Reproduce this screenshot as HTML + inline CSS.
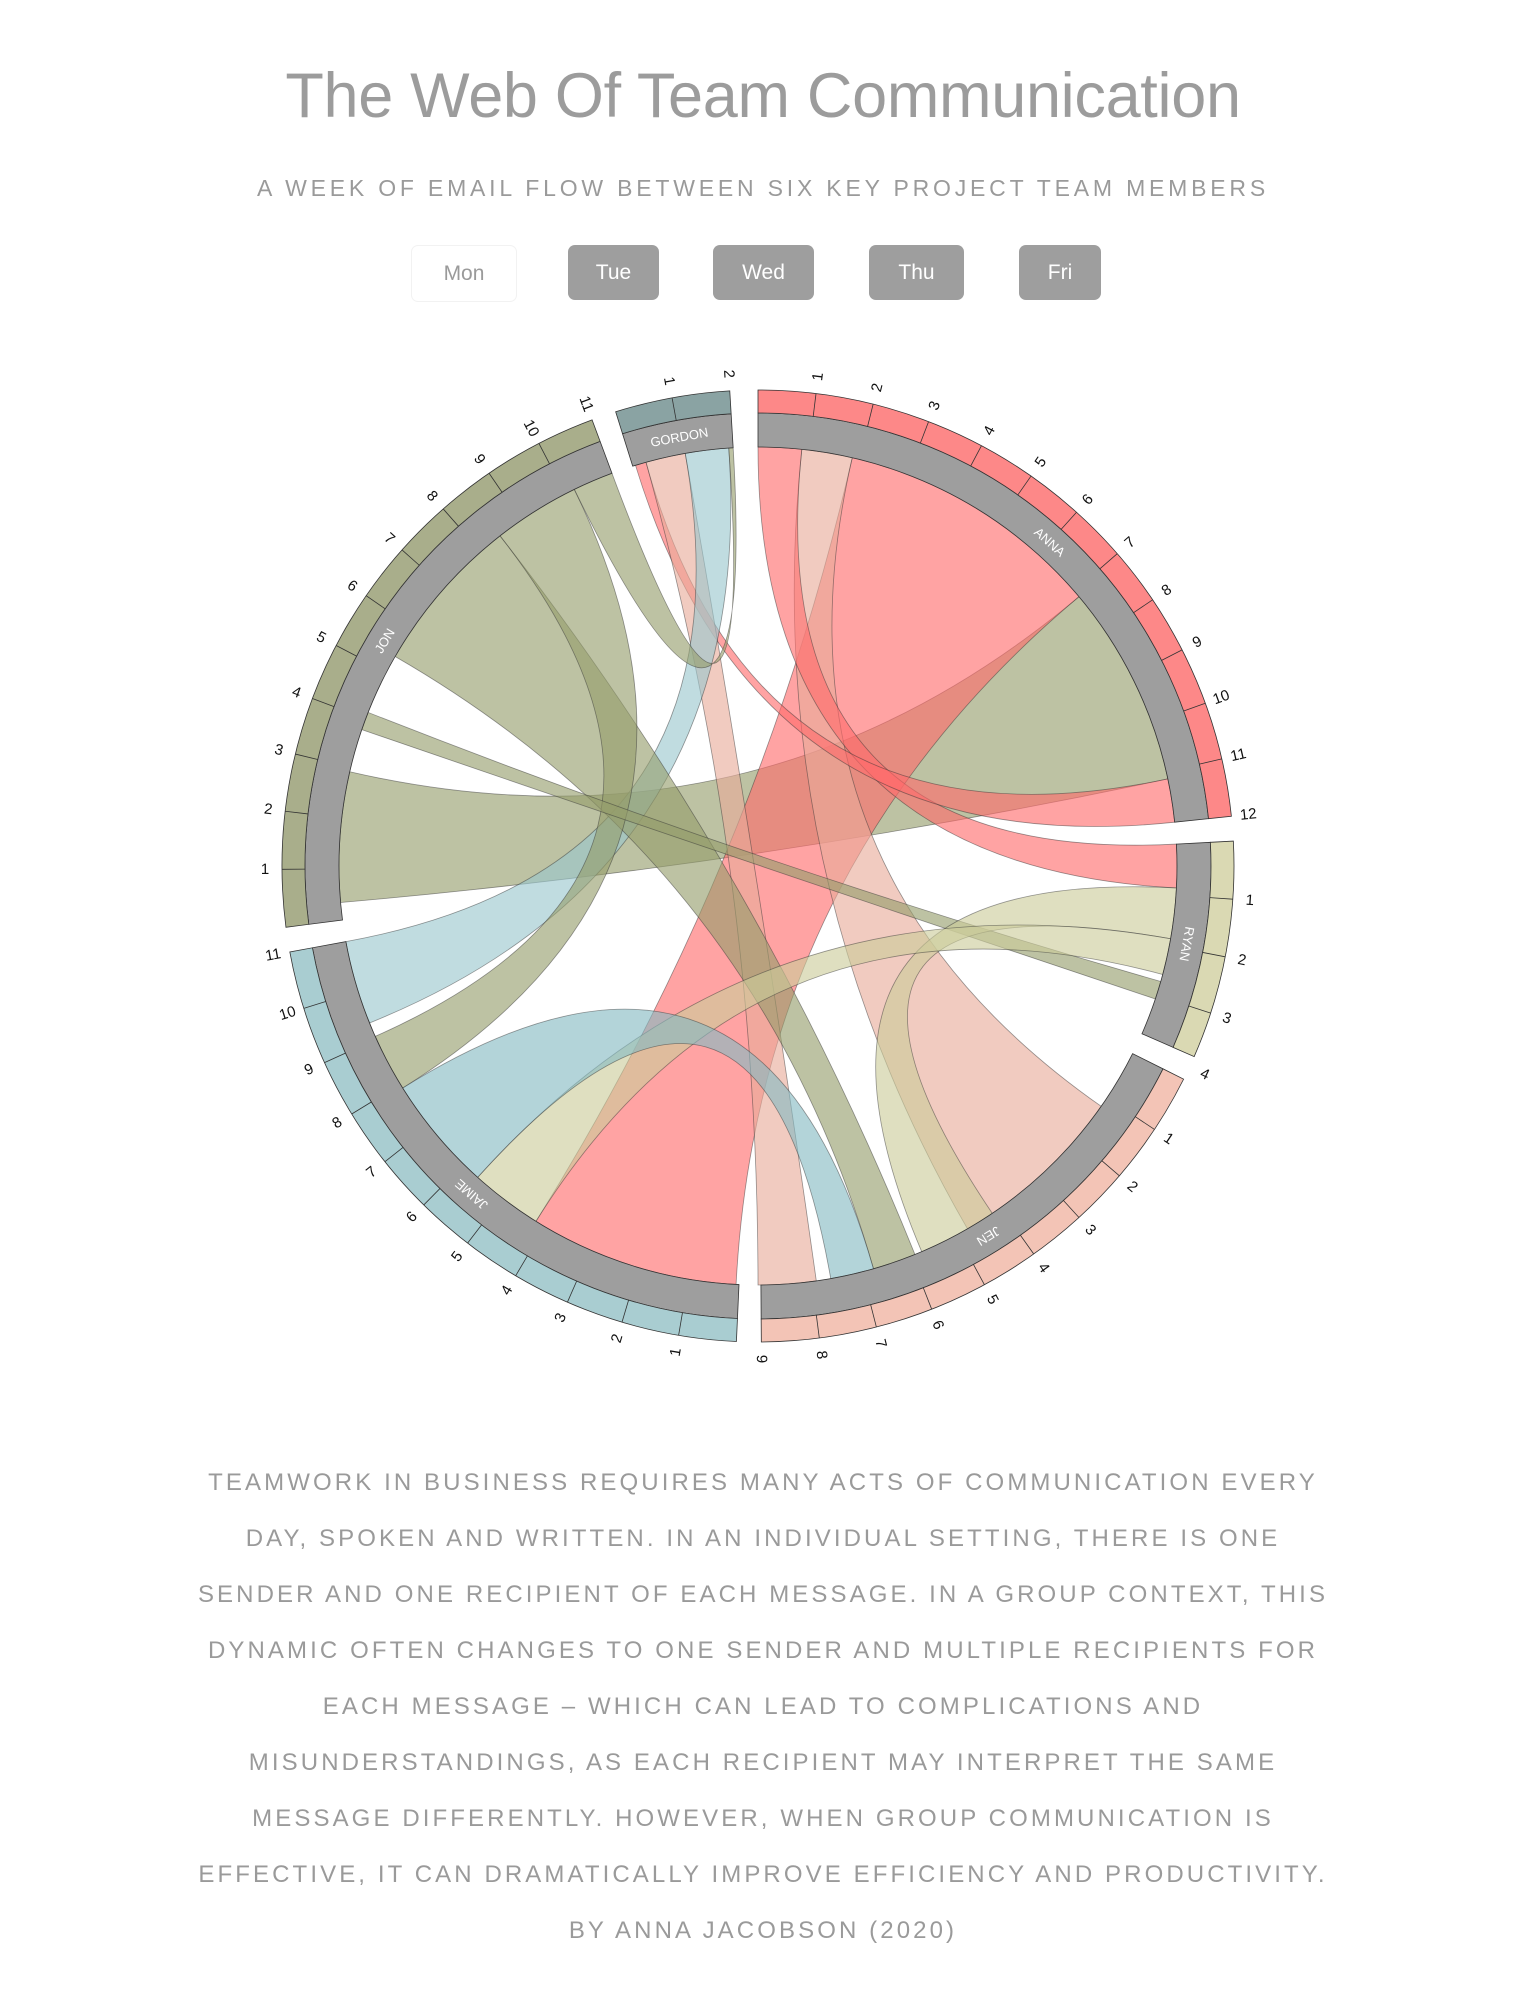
<!DOCTYPE html>
<html><head><meta charset="utf-8">
<style>
html,body{margin:0;padding:0;background:#fff;}
body{width:1526px;height:2000px;position:relative;overflow:hidden;font-family:"Liberation Sans",sans-serif;color:#9b9b9b;}
h1{position:absolute;top:60px;left:0;width:1526px;text-align:center;margin:0;font-weight:normal;font-size:63px;color:#9c9c9c;letter-spacing:-0.3px;}
.sub{position:absolute;top:175px;left:0;width:1526px;text-align:center;font-size:23px;letter-spacing:3.8px;color:#9a9a9a;}
.btn{position:absolute;top:245px;height:55px;line-height:55px;text-align:center;border-radius:7px;background:#9e9e9e;color:#fff;font-size:21px;}
.mon{background:#fff;color:#9a9a9a;border:1px solid #f2f2f2;}
.para{position:absolute;top:1455px;left:0;width:1526px;text-align:center;font-size:24px;letter-spacing:3.1px;line-height:56px;color:#9a9a9a;}
svg{position:absolute;left:0;top:0;}
</style></head><body>
<h1>The Web Of Team Communication</h1>
<div class="sub">A WEEK OF EMAIL FLOW BETWEEN SIX KEY PROJECT TEAM MEMBERS</div>
<div class="btn mon" style="left:411px;width:104px;">Mon</div>
<div class="btn" style="left:568px;width:91px;">Tue</div>
<div class="btn" style="left:713px;width:101px;">Wed</div>
<div class="btn" style="left:869px;width:95px;">Thu</div>
<div class="btn" style="left:1019px;width:82px;">Fri</div>

<svg width="1526" height="1420" viewBox="0 0 1526 1420" id="chart">
<g id="chords"></g>
<g id="ring"></g>
<g font-family="Liberation Sans, sans-serif" font-size="15" fill="#111" text-anchor="middle" dominant-baseline="central">
<text transform="translate(758 866) rotate(-83) translate(493 0)">1</text>
<text transform="translate(758 866) rotate(-76) translate(493 0)">2</text>
<text transform="translate(758 866) rotate(-69) translate(493 0)">3</text>
<text transform="translate(758 866) rotate(-62) translate(493 0)">4</text>
<text transform="translate(758 866) rotate(-55) translate(493 0)">5</text>
<text transform="translate(758 866) rotate(-48) translate(493 0)">6</text>
<text transform="translate(758 866) rotate(-41) translate(493 0)">7</text>
<text transform="translate(758 866) rotate(-34) translate(493 0)">8</text>
<text transform="translate(758 866) rotate(-27) translate(493 0)">9</text>
<text transform="translate(758 866) rotate(-20) translate(493 0)">10</text>
<text transform="translate(758 866) rotate(-13) translate(493 0)">11</text>
<text transform="translate(758 866) rotate(-6) translate(493 0)">12</text>
<text transform="translate(758 866) rotate(4) translate(493 0)">1</text>
<text transform="translate(758 866) rotate(11) translate(493 0)">2</text>
<text transform="translate(758 866) rotate(18) translate(493 0)">3</text>
<text transform="translate(758 866) rotate(25) translate(493 0)">4</text>
<text transform="translate(758 866) rotate(33.6) translate(493 0)">1</text>
<text transform="translate(758 866) rotate(40.6) translate(493 0)">2</text>
<text transform="translate(758 866) rotate(47.6) translate(493 0)">3</text>
<text transform="translate(758 866) rotate(54.6) translate(493 0)">4</text>
<text transform="translate(758 866) rotate(61.6) translate(493 0)">5</text>
<text transform="translate(758 866) rotate(68.6) translate(493 0)">6</text>
<text transform="translate(758 866) rotate(75.6) translate(493 0)">7</text>
<text transform="translate(758 866) rotate(82.6) translate(493 0)">8</text>
<text transform="translate(758 866) rotate(89.6) translate(493 0)">9</text>
<text transform="translate(758 866) rotate(99.6) translate(493 0) rotate(180)">1</text>
<text transform="translate(758 866) rotate(106.6) translate(493 0) rotate(180)">2</text>
<text transform="translate(758 866) rotate(113.6) translate(493 0) rotate(180)">3</text>
<text transform="translate(758 866) rotate(120.6) translate(493 0) rotate(180)">4</text>
<text transform="translate(758 866) rotate(127.6) translate(493 0) rotate(180)">5</text>
<text transform="translate(758 866) rotate(134.6) translate(493 0) rotate(180)">6</text>
<text transform="translate(758 866) rotate(141.6) translate(493 0) rotate(180)">7</text>
<text transform="translate(758 866) rotate(148.6) translate(493 0) rotate(180)">8</text>
<text transform="translate(758 866) rotate(155.6) translate(493 0) rotate(180)">9</text>
<text transform="translate(758 866) rotate(162.6) translate(493 0) rotate(180)">10</text>
<text transform="translate(758 866) rotate(169.6) translate(493 0) rotate(180)">11</text>
<text transform="translate(758 866) rotate(179.6) translate(493 0) rotate(180)">1</text>
<text transform="translate(758 866) rotate(186.6) translate(493 0) rotate(180)">2</text>
<text transform="translate(758 866) rotate(193.6) translate(493 0) rotate(180)">3</text>
<text transform="translate(758 866) rotate(200.6) translate(493 0) rotate(180)">4</text>
<text transform="translate(758 866) rotate(207.6) translate(493 0) rotate(180)">5</text>
<text transform="translate(758 866) rotate(214.6) translate(493 0) rotate(180)">6</text>
<text transform="translate(758 866) rotate(221.6) translate(493 0) rotate(180)">7</text>
<text transform="translate(758 866) rotate(228.6) translate(493 0) rotate(180)">8</text>
<text transform="translate(758 866) rotate(235.6) translate(493 0) rotate(180)">9</text>
<text transform="translate(758 866) rotate(242.6) translate(493 0) rotate(180)">10</text>
<text transform="translate(758 866) rotate(249.6) translate(493 0) rotate(180)">11</text>
<text transform="translate(758 866) rotate(259.6) translate(493 0) rotate(180)">1</text>
<text transform="translate(758 866) rotate(266.6) translate(493 0) rotate(180)">2</text>
</g>
<g font-family="Liberation Sans, sans-serif" font-size="13" fill="#fff" text-anchor="middle" dominant-baseline="central">
<text transform="translate(758 866) rotate(349.6) translate(0 -436)">GORDON</text>
<text transform="translate(758 866) rotate(42) translate(0 -436)">ANNA</text>
<text transform="translate(758 866) rotate(100.3) translate(0 -436)">RYAN</text>
<text transform="translate(758 866) rotate(148.1) translate(0 -436)">JEN</text>
<text transform="translate(758 866) rotate(221.1) translate(0 -436)">JAIME</text>
<text transform="translate(758 866) rotate(301.1) translate(0 -436)">JON</text>
</g>
</svg>

<div class="para">TEAMWORK IN BUSINESS REQUIRES MANY ACTS OF COMMUNICATION EVERY<br>DAY, SPOKEN AND WRITTEN. IN AN INDIVIDUAL SETTING, THERE IS ONE<br>SENDER AND ONE RECIPIENT OF EACH MESSAGE. IN A GROUP CONTEXT, THIS<br>DYNAMIC OFTEN CHANGES TO ONE SENDER AND MULTIPLE RECIPIENTS FOR<br>EACH MESSAGE – WHICH CAN LEAD TO COMPLICATIONS AND<br>MISUNDERSTANDINGS, AS EACH RECIPIENT MAY INTERPRET THE SAME<br>MESSAGE DIFFERENTLY. HOWEVER, WHEN GROUP COMMUNICATION IS<br>EFFECTIVE, IT CAN DRAMATICALLY IMPROVE EFFICIENCY AND PRODUCTIVITY.<br>BY ANNA JACOBSON (2020)</div>

<script>
(function(){
var cx=758,cy=866,RI=419,RO=453,RT=476,NS="http://www.w3.org/2000/svg";
function p(a,r){var t=a*Math.PI/180;return [(cx+r*Math.sin(t)).toFixed(2),(cy-r*Math.cos(t)).toFixed(2)];}
function sector(a0,a1,r0,r1){var A=p(a0,r1),B=p(a1,r1),C=p(a1,r0),D=p(a0,r0),L=(a1-a0)>180?1:0;
return "M"+A+" A"+r1+" "+r1+" 0 "+L+" 1 "+B+" L"+C+" A"+r0+" "+r0+" 0 "+L+" 0 "+D+" Z";}
function el(tag,attrs,parent){var e=document.createElementNS(NS,tag);for(var k in attrs)e.setAttribute(k,attrs[k]);parent.appendChild(e);return e;}
var groups=[
 {s:342.6,e:356.6,band:"#8aa3a3"},
 {s:0,e:84,band:"#fd8888"},
 {s:87,e:113.6,band:"#dad9b3"},
 {s:116.6,e:179.6,band:"#f3c4b6"},
 {s:182.6,e:259.6,band:"#a9cdd1"},
 {s:262.6,e:339.6,band:"#a9ae8b"}];
var ring=document.getElementById("ring");
groups.forEach(function(g){
 el("path",{d:sector(g.s,g.e,RI,RO),fill:"#9e9e9e",stroke:"#333","stroke-width":"0.8"},ring);
 el("path",{d:sector(g.s,g.e,RO,RT),fill:g.band,stroke:"#333","stroke-width":"0.8"},ring);
 for(var a=g.s+7;a<g.e-0.5;a+=7){var P=p(a,RO),Q=p(a,RT);el("line",{x1:P[0],y1:P[1],x2:Q[0],y2:Q[1],stroke:"#333","stroke-width":"0.8"},ring);}
});
var C={anna:"#ff6b6b",jen:"#e8ab99",gordon:"#9ac7cd",jaime:"#84bac1",jon:"#959c6b",ryan:"#cccc9a"};
var chords=[
 ["jon",265,283,50,78],
 ["anna",13,50,183,212],
 ["jen",125,150,6,13],
 ["anna",0,6,87,93],
 ["anna",78,84,343,344.5],
 ["jen",172,180,344.5,350],
 ["gordon",350,356,248,259.6],
 ["jon",300,322,158,164],
 ["jon",322,334,238,246],
 ["jon",334,339.6,356,356.6],
 ["jon",289,291.5,106,108.5],
 ["ryan",93,100,146,157],
 ["ryan",100,105,212,222],
 ["jaime",222,238,164,170]];
var cg=document.getElementById("chords");
chords.forEach(function(c){
 var a1=p(c[1],RI),a2=p(c[2],RI),b1=p(c[3],RI),b2=p(c[4],RI);
 var d="M"+a1+" A"+RI+" "+RI+" 0 0 1 "+a2+" Q"+cx+" "+cy+" "+b1+" A"+RI+" "+RI+" 0 0 1 "+b2+" Q"+cx+" "+cy+" "+a1+" Z";
 el("path",{d:d,fill:C[c[0]],"fill-opacity":"0.62",stroke:"#333","stroke-opacity":"0.5","stroke-width":"0.8"},cg);
});
})();
</script>
</body></html>
